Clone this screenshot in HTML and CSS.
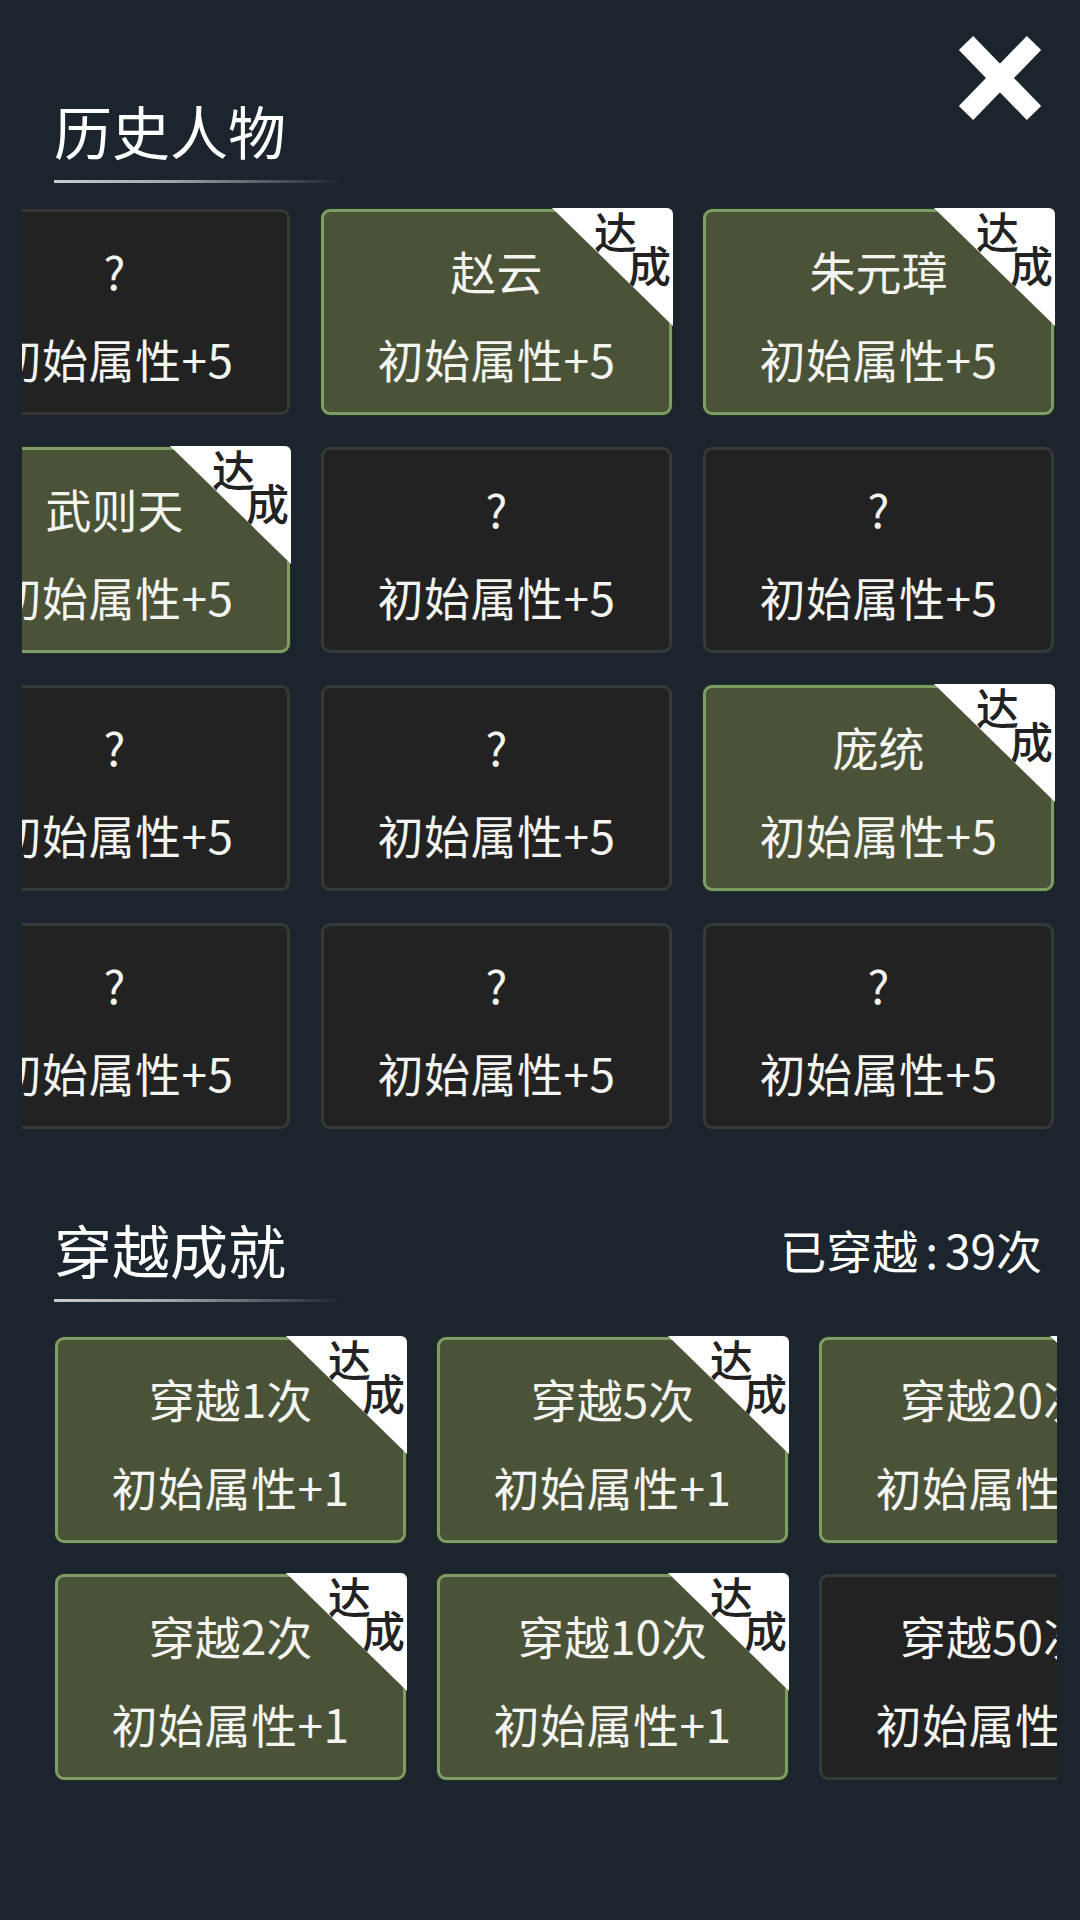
FILE: index.html
```html
<!DOCTYPE html>
<html lang="zh-CN">
<head>
<meta charset="utf-8">
<title>成就</title>
<link rel="stylesheet" href="styles.css">
</head>
<body>
<div class="page">
  <button class="close" aria-label="关闭">
    <svg width="84" height="86" viewBox="0 0 84 86">
      <line x1="8" y1="8" x2="76" y2="78" stroke="#ffffff" stroke-width="20"/>
      <line x1="76" y1="8" x2="8" y2="78" stroke="#ffffff" stroke-width="20"/>
    </svg>
  </button>

  <section class="section">
    <div class="section-head first">
      <div class="title-block">
        <h2 class="title">历史人物</h2>
        <div class="underline"></div>
      </div>
    </div>
    <div class="scroller scroller-hist">
      <div class="grid grid-hist">
        <div class="card"><div class="name">?</div><div class="reward">初始属性+5</div></div>
        <div class="card done"><div class="name">赵云</div><div class="reward">初始属性+5</div><div class="badge"><span class="b1">达</span><span class="b2">成</span></div></div>
        <div class="card done"><div class="name">朱元璋</div><div class="reward">初始属性+5</div><div class="badge"><span class="b1">达</span><span class="b2">成</span></div></div>

        <div class="card done"><div class="name">武则天</div><div class="reward">初始属性+5</div><div class="badge"><span class="b1">达</span><span class="b2">成</span></div></div>
        <div class="card"><div class="name">?</div><div class="reward">初始属性+5</div></div>
        <div class="card"><div class="name">?</div><div class="reward">初始属性+5</div></div>

        <div class="card"><div class="name">?</div><div class="reward">初始属性+5</div></div>
        <div class="card"><div class="name">?</div><div class="reward">初始属性+5</div></div>
        <div class="card done"><div class="name">庞统</div><div class="reward">初始属性+5</div><div class="badge"><span class="b1">达</span><span class="b2">成</span></div></div>

        <div class="card"><div class="name">?</div><div class="reward">初始属性+5</div></div>
        <div class="card"><div class="name">?</div><div class="reward">初始属性+5</div></div>
        <div class="card"><div class="name">?</div><div class="reward">初始属性+5</div></div>
      </div>
    </div>
  </section>

  <section class="section">
    <div class="section-head second">
      <div class="title-block">
        <h2 class="title">穿越成就</h2>
        <div class="underline"></div>
      </div>
      <div class="count">已穿越<span class="colon">:</span>39次</div>
    </div>
    <div class="scroller scroller-ach">
      <div class="grid grid-ach">
        <div class="card done"><div class="name">穿越1次</div><div class="reward">初始属性+1</div><div class="badge"><span class="b1">达</span><span class="b2">成</span></div></div>
        <div class="card done"><div class="name">穿越5次</div><div class="reward">初始属性+1</div><div class="badge"><span class="b1">达</span><span class="b2">成</span></div></div>
        <div class="card done"><div class="name">穿越20次</div><div class="reward">初始属性+1</div><div class="badge"><span class="b1">达</span><span class="b2">成</span></div></div>

        <div class="card done"><div class="name">穿越2次</div><div class="reward">初始属性+1</div><div class="badge"><span class="b1">达</span><span class="b2">成</span></div></div>
        <div class="card done"><div class="name">穿越10次</div><div class="reward">初始属性+1</div><div class="badge"><span class="b1">达</span><span class="b2">成</span></div></div>
        <div class="card"><div class="name">穿越50次</div><div class="reward">初始属性+1</div></div>
      </div>
    </div>
  </section>
</div>
</body>
</html>
```

FILE: styles.css
```css
html, body {
  margin: 0;
  padding: 0;
  background: #1c252d;
}

body {
  width: 1080px;
  height: 1920px;
  font-family: "Noto Sans CJK SC", "Noto Sans", sans-serif;
  color: #f4f4f0;
  overflow: hidden;
}

.page {
  position: relative;
  width: 1080px;
  height: 1920px;
}

.close {
  position: absolute;
  top: 35px;
  right: 38px;
  width: 84px;
  height: 86px;
  padding: 0;
  margin: 0;
  border: 0;
  background: transparent;
  display: block;
}

.close svg {
  display: block;
}

.section-head {
  display: flex;
  justify-content: space-between;
  align-items: flex-start;
  padding: 0 38px 0 54px;
}

.section-head.first {
  padding-top: 101px;
}

.section-head.second {
  margin-top: 87px;
}

.title-block {
  width: 288px;
}

.title {
  margin: 0;
  font-size: 58px;
  line-height: 58px;
  font-weight: 400;
  color: #ffffff;
  letter-spacing: 0;
}

.underline {
  margin-top: 21px;
  height: 3px;
  background: linear-gradient(90deg, #c9ccd0 0%, #a0a6ac 40%, rgba(140, 146, 152, 0) 100%);
}

.count {
  font-size: 46px;
  line-height: 58px;
  color: #ffffff;
}

.count .colon {
  margin: 0 7px;
}

.scroller {
  overflow: hidden;
  padding: 4px 0;
}

.scroller-hist {
  margin-top: 22px;
  margin-left: 22px;
  width: 1036px;
}

.scroller-ach {
  margin-top: 31px;
  margin-left: 55px;
  width: 1002px;
}

.grid {
  display: grid;
  grid-template-columns: repeat(3, 351px);
  grid-auto-rows: 206px;
  column-gap: 31px;
  row-gap: 32px;
}

.grid-hist {
  margin-left: -83px;
}

.grid-ach {
  row-gap: 31px;
}

.card {
  position: relative;
  box-sizing: border-box;
  background: #222222;
  border: 3px solid #363a36;
  border-radius: 9px;
  display: flex;
  flex-direction: column;
  align-items: center;
  padding-top: 28px;
  gap: 28px;
  white-space: nowrap;
}

.card.done {
  background: #4a5237;
  border-color: #7e9c65;
  box-shadow: 0 0 0 1px #223020;
}

.name,
.reward {
  font-size: 46px;
  line-height: 60px;
  color: #f4f4f0;
}

.reward {
  letter-spacing: 0.5px;
}

.badge {
  position: absolute;
  top: -4px;
  right: -4px;
  width: 121px;
  height: 118px;
  background: #ffffff;
  clip-path: polygon(0 0, 100% 0, 100% 100%);
  border-top-right-radius: 6px;
}

.badge span {
  position: absolute;
  font-size: 43px;
  line-height: 43px;
  font-weight: 500;
  color: #222222;
}

.badge .b1 {
  left: 42px;
  top: 1px;
}

.badge .b2 {
  left: 76px;
  top: 35px;
}
```
